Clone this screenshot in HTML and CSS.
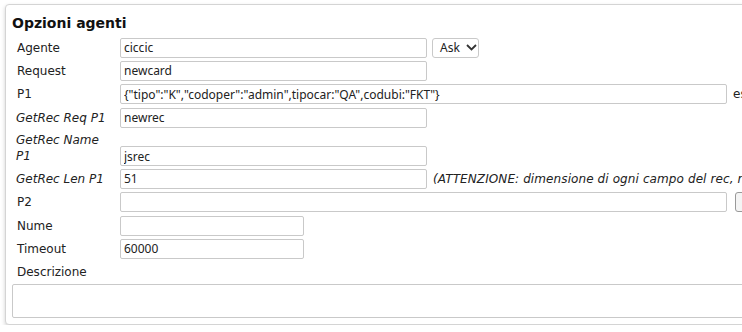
FILE: index.html
```html
<!DOCTYPE html>
<html lang="it">
<head>
<meta charset="utf-8">
<title>Opzioni agenti</title>
<link rel="stylesheet" href="styles.css">
</head>
<body>
<div class="panel">
  <h2 class="title">Opzioni agenti</h2>
  <div class="form">
    <label class="lbl">Agente</label>
    <div class="field">
      <input class="inp w-md" type="text" value="ciccic">
      <div class="select"><span>Ask</span><svg width="11" height="7" viewBox="0 0 11 7"><path d="M1 1 L5.5 5.5 L10 1" fill="none" stroke="#333" stroke-width="1.8"/></svg></div>
    </div>

    <label class="lbl">Request</label>
    <div class="field"><input class="inp w-md" type="text" value="newcard"></div>

    <label class="lbl">P1</label>
    <div class="field">
      <input class="inp w-lg" type="text" value='{"tipo":"K","codoper":"admin",tipocar:"QA",codubi:"FKT"}'>
      <span class="note">es. {"tipo":"K"}</span>
    </div>

    <label class="lbl it">GetRec Req P1</label>
    <div class="field"><input class="inp w-md" type="text" value="newrec"></div>

    <label class="lbl it tall">GetRec Name P1</label>
    <div class="field bottom"><input class="inp w-md" type="text" value="jsrec"></div>

    <label class="lbl it">GetRec Len P1</label>
    <div class="field">
      <input class="inp w-md" type="text" value="51">
      <span class="note it">(ATTENZIONE: dimensione di ogni campo del rec, riempito con spazi)</span>
    </div>

    <label class="lbl">P2</label>
    <div class="field">
      <input class="inp w-lg" type="text" value="">
      <button class="btn" type="button">...</button>
    </div>

    <label class="lbl">Nume</label>
    <div class="field"><input class="inp w-sm" type="text" value=""></div>

    <label class="lbl">Timeout</label>
    <div class="field"><input class="inp w-sm" type="text" value="60000"></div>

    <label class="lbl span">Descrizione</label>
    <textarea class="area"></textarea>
  </div>
</div>
</body>
</html>
```

FILE: styles.css
```css
html, body {
  margin: 0;
  padding: 0;
  overflow: hidden;
  background: #ffffff;
}
body {
  font-family: "DejaVu Sans", Verdana, sans-serif;
  font-size: 12px;
  color: #222;
}
.panel {
  width: 900px;
  margin: 4px 0 0 5px;
  border: 1px solid #d4d4d4;
  border-radius: 4px;
  box-shadow: 0 2px 4px rgba(0,0,0,0.18);
  padding: 8px 6px 6px 6px;
  background: #fff;
}
.title {
  margin: 0;
  font-size: 14px;
  font-weight: bold;
  line-height: 21px;
  height: 23px;
  color: #111;
}
.form {
  display: grid;
  grid-template-columns: 108px 1fr;
  grid-auto-rows: minmax(23.33px, auto);
  align-items: center;
}
.lbl {
  padding: 0 8px 0 5px;
  line-height: 16px;
  color: #222;
}
.lbl.it {
  font-style: italic;
  padding-left: 4px;
}
.lbl.tall {
  align-self: stretch;
  height: 38px;
  box-sizing: border-box;
  padding-top: 3px;
}
.lbl.span {
  grid-column: 1 / 3;
}
.field {
  display: flex;
  align-items: center;
}
.field.bottom {
  align-self: end;
  padding-bottom: 1px;
}
.inp {
  box-sizing: border-box;
  height: 20px;
  border: 1px solid #c9c9c9;
  border-radius: 2px;
  padding: 0 3px;
  margin: 0;
  font-family: "Noto Sans", "Open Sans", sans-serif;
  font-size: 12px;
  color: #222;
  background: #fff;
  outline: none;
}
.w-md { width: 307px; }
.w-lg { width: 607px; }
.w-sm { width: 184px; }
.select {
  box-sizing: border-box;
  margin-left: 5px;
  width: 47px;
  height: 20px;
  border: 1px solid #c9c9c9;
  border-radius: 3px;
  display: flex;
  align-items: center;
  gap: 6px;
  padding-left: 7px;
  font-family: "Noto Sans", "Open Sans", sans-serif;
  font-size: 12px;
  color: #222;
}
.note {
  margin-left: 6px;
  white-space: nowrap;
  color: #222;
}
.note.it {
  font-style: italic;
  letter-spacing: 0.1px;
}
.btn {
  box-sizing: border-box;
  margin-left: 8px;
  height: 20px;
  width: 40px;
  border: 1px solid #999;
  border-radius: 3px;
  background: #f4f4f4;
  font-size: 12px;
  padding: 0;
}
.area {
  grid-column: 1 / 3;
  box-sizing: border-box;
  height: 34px;
  width: 100%;
  margin: 0;
  border: 1px solid #c9c9c9;
  border-radius: 2px;
  resize: none;
}
```
